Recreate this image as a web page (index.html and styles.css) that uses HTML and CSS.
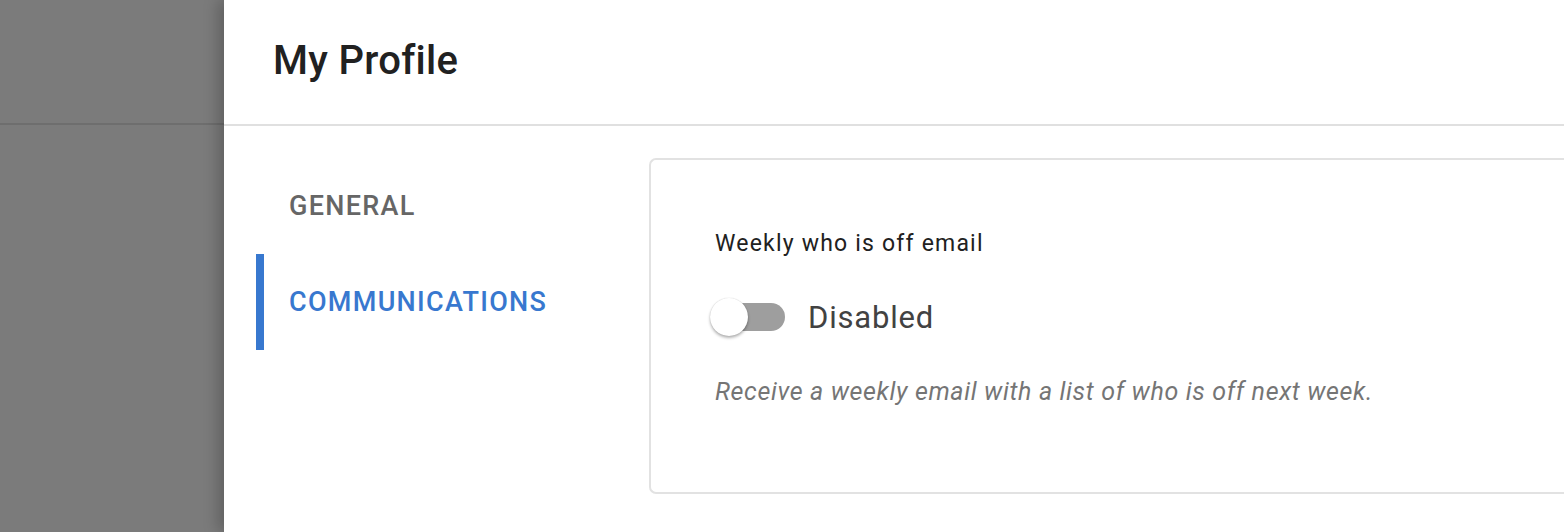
FILE: index.html
```html
<!DOCTYPE html>
<html>
<head>
<meta charset="utf-8">
<link rel="stylesheet" href="styles.css">
</head>
<body>
<div class="app">
  <div class="backdrop">
    <div class="backdrop-header"></div>
  </div>
  <div class="drawer">
    <header class="drawer-header">
      <h1 class="title">My Profile</h1>
    </header>
    <div class="drawer-body">
      <nav class="tabs">
        <div class="tab">GENERAL</div>
        <div class="tab tab-active">COMMUNICATIONS</div>
      </nav>
      <section class="card">
        <div class="setting-label">Weekly who is off email</div>
        <div class="toggle-row">
          <span class="switch">
            <span class="switch-track"></span>
            <span class="switch-thumb"></span>
          </span>
          <span class="switch-text">Disabled</span>
        </div>
        <div class="setting-help">Receive a weekly email with a list of who is off next week.</div>
      </section>
    </div>
  </div>
</div>
</body>
</html>
```
FILE: styles.css
```css
* { box-sizing: border-box; }
html, body { margin: 0; padding: 0; }
body {
  font-family: Roboto, "Noto Sans", "Liberation Sans", sans-serif;
  background: #ffffff;
  overflow: hidden;
}
.app {
  display: flex;
  width: 1564px;
  height: 532px;
}
.backdrop {
  width: 224px;
  flex: none;
  background: #7b7b7b;
}
.backdrop-header {
  height: 125px;
  border-bottom: 2px solid #6e6e6e;
}
.drawer {
  flex: 1;
  background: #ffffff;
  box-shadow: -6px 0 14px rgba(0,0,0,0.22);
  position: relative;
  z-index: 1;
  display: flex;
  flex-direction: column;
  min-width: 0;
}
.drawer-header {
  height: 126px;
  border-bottom: 2px solid #e0e0e0;
  display: flex;
  align-items: center;
  padding-left: 49px;
  padding-bottom: 4px;
}
.title {
  margin: 0;
  font-size: 40px;
  font-weight: 500;
  color: #212121;
  letter-spacing: 0.3px;
}
.drawer-body {
  display: flex;
  padding-top: 32px;
  padding-left: 32px;
}
.tabs {
  width: 393px;
  flex: none;
  display: flex;
  flex-direction: column;
}
.tab {
  height: 96px;
  display: flex;
  align-items: center;
  padding-left: 33px;
  font-size: 27px;
  font-weight: 500;
  letter-spacing: 1.3px;
  color: #666666;
}
.tab-active {
  color: #3878cf;
  border-left: 8px solid #3878cf;
  padding-left: 25px;
}
.card {
  flex: 1;
  height: 336px;
  border: 2px solid #e2e2e2;
  border-right: 0;
  border-radius: 7px 0 0 7px;
  padding: 70px 0 0 64px;
}
.setting-label {
  font-size: 23px;
  letter-spacing: 1.2px;
  color: #212121;
  line-height: 28px;
}
.toggle-row {
  display: flex;
  align-items: center;
  margin-top: 39px;
  height: 40px;
}
.switch {
  position: relative;
  width: 76px;
  height: 40px;
  flex: none;
  margin-left: -6px;
}
.switch-track {
  position: absolute;
  left: 8px;
  top: 6px;
  width: 68px;
  height: 28px;
  border-radius: 14px;
  background: #9e9e9e;
}
.switch-thumb {
  position: absolute;
  left: 1px;
  top: 1px;
  width: 38px;
  height: 38px;
  border-radius: 50%;
  background: #ffffff;
  box-shadow: 0 2px 3px rgba(0,0,0,0.3), 0 0 1px rgba(0,0,0,0.2);
}
.switch-text {
  margin-left: 23px;
  font-size: 31px;
  color: #424242;
  letter-spacing: 0.8px;
}
.setting-help {
  margin-top: 40px;
  font-size: 25px;
  font-style: italic;
  color: #757575;
  letter-spacing: 0.65px;
}
```
